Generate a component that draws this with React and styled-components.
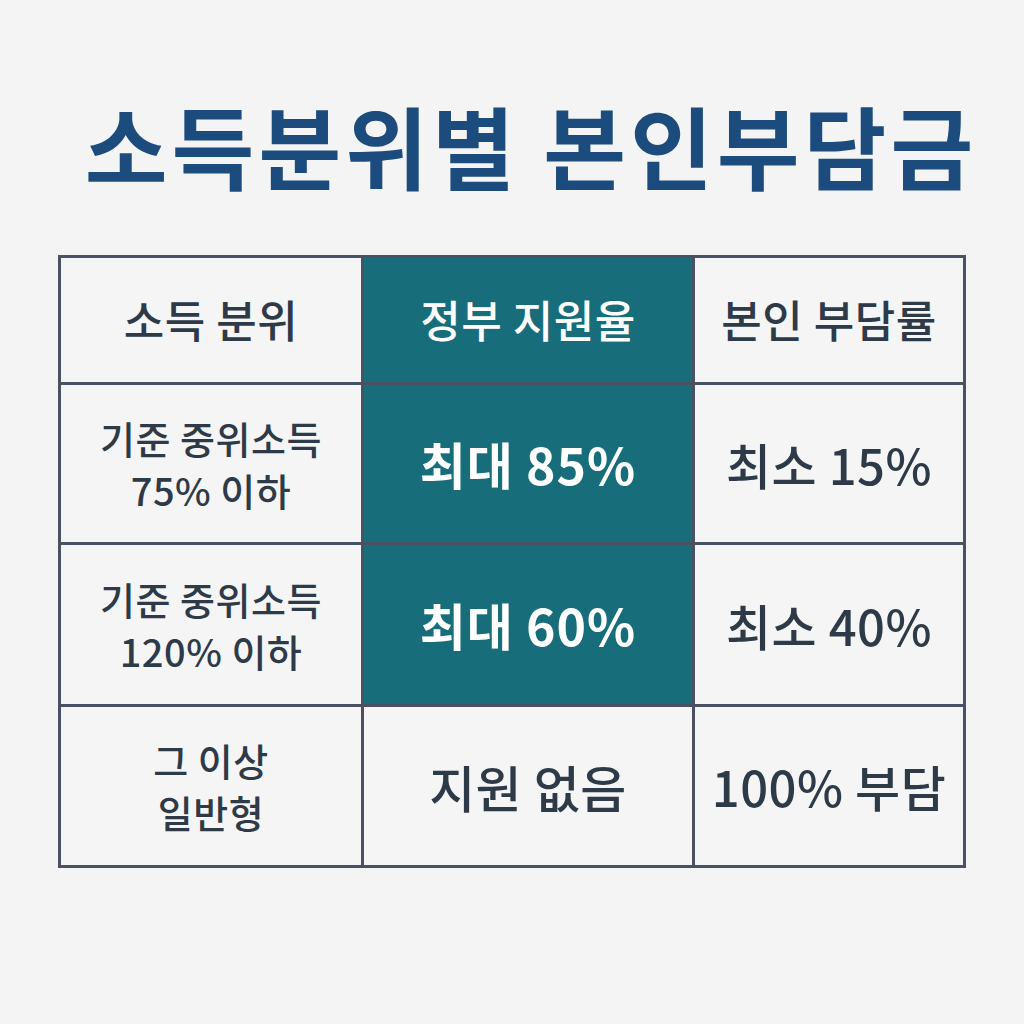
import React from 'react';
import styled, { createGlobalStyle } from 'styled-components';

const GlobalStyle = createGlobalStyle`
  html, body {
    margin: 0;
    padding: 0;
    background: #f4f4f4;
  }
  body {
    font-family: "Noto Sans CJK KR", "Noto Sans", sans-serif;
  }
`;

const Page = styled.div`
  width: 1024px;
  height: 1024px;
  box-sizing: border-box;
  padding-top: 89px;
  display: flex;
  flex-direction: column;
  align-items: center;
`;

const Title = styled.h1`
  margin: 0 0 0 38px;
  font-size: 90px;
  line-height: 110px;
  font-weight: 700;
  color: #1c4b7d;
  letter-spacing: 4px;
`;

const Table = styled.div`
  margin-top: 56px;
  display: grid;
  grid-template-columns: 300px 328px 268px;
  grid-template-rows: 124px 157px 159px 158px;
  gap: 3px;
  padding: 3px;
  background: #4b5162;
`;

const Cell = styled.div`
  display: flex;
  flex-direction: column;
  align-items: center;
  justify-content: center;
  text-align: center;
  background: ${p => (p.$accent ? '#176e7a' : '#f5f5f5')};
  color: ${p => (p.$accent ? '#ffffff' : '#2e3a48')};
  font-size: ${p => p.$size || 44}px;
  font-weight: ${p => p.$weight || 500};
  line-height: ${p => p.$lh || '1.3'};
  letter-spacing: ${p => p.$ls || 0}px;
  white-space: pre-line;
`;

const rows = [
  { label: '소득 분위', gov: '정부 지원율', self: '본인 부담률', header: true },
  { label: '기준 중위소득\n75% 이하', gov: '최대 85%', self: '최소 15%', accent: true },
  { label: '기준 중위소득\n120% 이하', gov: '최대 60%', self: '최소 40%', accent: true },
  { label: '그 이상\n일반형', gov: '지원 없음', self: '100% 부담' },
];

export default function App() {
  return (
    <>
      <GlobalStyle />
      <Page>
        <Title>소득분위별 본인부담금</Title>
        <Table>
          {rows.map((r, i) => (
            <React.Fragment key={i}>
              <Cell $size={r.header ? 44 : 38} $lh={r.header ? '1.3' : '52px'} $ls={0.5}>
                {r.label}
              </Cell>
              <Cell
                $accent={r.header || r.accent}
                $size={r.header ? 44 : 50}
                $weight={r.header ? 500 : r.accent ? 600 : 500}
                $ls={r.accent ? 1 : 0.5}
              >
                {r.gov}
              </Cell>
              <Cell $size={r.header ? 44 : 49} $ls={0.5}>
                {r.self}
              </Cell>
            </React.Fragment>
          ))}
        </Table>
      </Page>
    </>
  );
}
